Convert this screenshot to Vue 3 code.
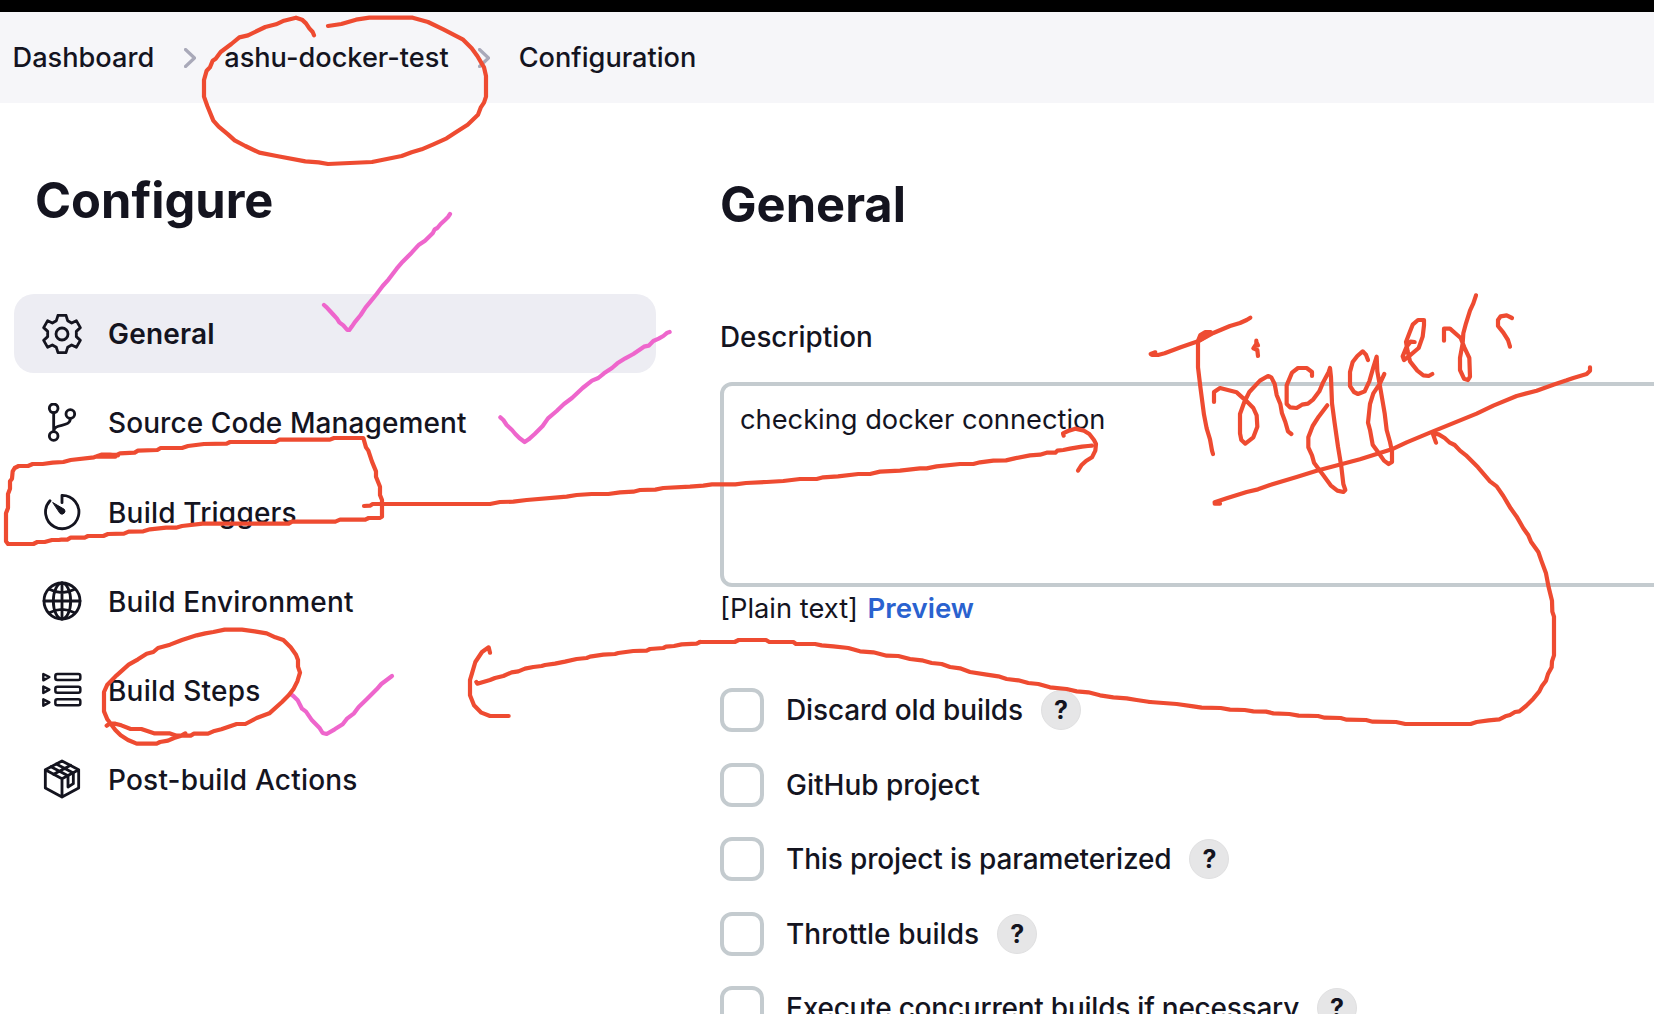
<script setup>
const crumbs = ['Dashboard', 'ashu-docker-test', 'Configuration']

const navItems = [
  { label: 'General', icon: 'gear', active: true },
  { label: 'Source Code Management', icon: 'branch', tight: true },
  { label: 'Build Triggers', icon: 'timer' },
  { label: 'Build Environment', icon: 'globe' },
  { label: 'Build Steps', icon: 'steps' },
  { label: 'Post-build Actions', icon: 'package' },
]

const options = [
  { label: 'Discard old builds', help: true, spacing: -0.12 },
  { label: 'GitHub project', help: false, spacing: 0 },
  { label: 'This project is parameterized', help: true, spacing: -0.15 },
  { label: 'Throttle builds', help: true, spacing: 0.06 },
  { label: 'Execute concurrent builds if necessary', help: true, spacing: -0.23 },
]

// Pen strokes, grouped by the corner they start from; coordinates are in thirds of a pixel.
const inkGroups = [
  {
    x: 0, y: 0, color: 'pink',
    strokes: [
      'M972 915L980 922L990 933L1001 945L1011 956L1018 967L1030 976L1042 990H1048L1056 979L1064 967L1082 945L1097 922L1112 904L1130 882L1148 858L1166 838L1190 806L1208 785L1235 758L1257 734L1275 722L1298 700L1304 688L1312 684L1322 672L1335 660L1344 651L1350 642',
    ],
  },
  {
    x: 380, y: 200, color: 'pink',
    strokes: ['M361 652L370 660L380 675L396 690L406 702L418 714L434 726L446 718L464 702L488 678L504 655L530 633L552 612L576 594L608 564L636 542L655 534L672 520L696 504L712 490L736 475L760 462L792 440L806 437L820 423L836 416L850 408L862 398L869 396'],
  },
  {
    x: 0, y: 560, color: 'pink',
    strokes: ['M872 402L880 408L893 421L906 446L918 455L936 481L958 503L968 519L980 522L1004 508L1028 493L1042 475L1062 460L1076 441L1100 418L1130 388L1144 372L1160 360L1176 348'],
  },
  {
    x: 0, y: 0, color: 'red',
    strokes: [
      'M942 106L938 96L928 85L918 70L906 59L888 53L852 62L828 73L796 81L744 106L718 112L694 132L662 156L647 176L638 182L630 202L620 212L612 240V290L622 318L640 362L656 380L684 403L704 421L736 438L778 458L830 468L916 484L956 487L984 492L1116 486L1205 468L1235 457L1265 448L1300 433L1340 415L1370 395L1403 374L1434 344L1442 323L1452 308L1458 290V228L1452 202L1432 168L1415 145L1388 118L1330 88L1284 66L1238 53H1108L1068 59L1024 72L984 78',
    ],
  },
  {
    x: 0, y: 280, color: 'red',
    strokes: [
      'M354 526L330 524H304L282 532L212 540L190 546L158 548L128 552H98L84 558H56L44 564L38 574L36 596L30 604V626L24 642V684L18 700V784L24 792H100L112 786H134L156 780H176L184 779H202L212 773H254L264 768H310L324 762L372 761L386 755L430 754L450 748L498 743H528L546 738L608 731H866L876 725H1006L1020 719H1096L1106 714H1138L1146 710V660L1140 645V620L1128 590V574L1116 545L1105 512L1098 502L1090 474H1002L990 479H838L826 486H690L680 491L612 492L564 498L546 504H482L472 510L414 512L404 518L360 520L352 524L300 526L286 530H346',
      'M1092 678L1110 677L1118 672H1470L1500 666L1540 665L1580 660L1700 650L1730 645L1775 642H1825L1860 637L1900 635L1920 630L1966 629L1990 624L2070 620L2110 617L2136 613H2206L2238 609L2300 606L2350 603L2400 597H2450L2470 592L2514 589L2575 582L2610 582L2640 575L2700 572L2760 565H2780L2810 559L2880 552H2920L2940 547L2980 542L3018 541L3044 535L3090 526L3120 524L3140 518H3166L3172 512L3190 510L3210 506L3246 500L3264 498L3276 497',
    ],
  },
  {
    x: 700, y: 160, color: 'red',
    strokes: ['M1091 827L1089 820L1104 813L1126 806L1152 812L1168 822L1182 840L1188 852L1186 872L1176 892L1158 903L1144 916L1134 932'],
  },
  {
    x: 1130, y: 280, color: 'red',
    strokes: [
      'M62 222L76 217M66 225H84L104 220L152 202L204 184L250 159L300 138L330 129L350 120L361 113',
      'M242 156H226L211 165L205 180L230 168L204 184V262L211 320L222 404L230 445L240 478L246 512L249 522',
      'M252 366V336L270 324L320 337L350 364L370 384L380 406L382 440L370 472L346 491L334 480L330 460V402L343 366L358 336L390 302L414 288L424 292L434 312L440 345L451 372L456 400L466 426L474 454L484 462',
      'M379 182V192L370 205L382 210L384 228M379 186L384 196',
      'M546 288V276L530 264H504L486 278L470 316V372L480 382L500 384L516 374L534 371L550 358L568 334L578 310L596 276L600 264L603 292L606 370L614 430L624 500L634 560L640 612L646 630L640 636L622 632L602 616L580 586L552 548L546 526L535 502V472L548 438L566 410L592 376',
      'M714 240L708 224L698 214L682 228L668 246L660 276V318L672 336L684 342L704 334L718 304L730 262L740 230L742 274L752 330L764 400L770 450L780 486L786 514V546L776 552L762 542L744 516L728 494L720 450L714 428L720 372L730 340L750 310L763 282',
      'M854 186L842 185L830 200L818 229L822 240L840 226L866 204L878 170L882 136V120H864L848 134L838 160L828 186L833 214L840 244L862 272L880 286L896 288L907 282',
      'M942 182V146L960 146L992 174L1003 202L1018 234L1020 290L1014 300L1002 296L990 270V234L998 190L1000 160L1008 130L1020 92L1030 70L1038 46',
      'M1146 114L1130 106L1112 109L1104 120V138L1120 158L1134 180L1140 200',
      'M254 671H270M254 667L290 655L350 636L384 628L420 615L500 591L560 572L690 538L790 506L830 487L900 458L1040 401L1090 377L1160 348L1220 332L1270 314L1310 301L1330 294L1370 282L1380 272V262',
    ],
  },
  {
    x: 1150, y: 500, color: 'red',
    strokes: [
      'M858 -172L848 -200L866 -197L884 -186L898 -173L914 -165L930 -148L948 -134L984 -98L1020 -56L1040 -41L1060 -12L1070 5L1082 25L1100 50L1120 85L1135 106L1143 125L1165 156L1174 182L1188 220L1196 262L1206 302L1207 335L1212 350V466L1206 484L1205 502L1194 522L1188 542L1176 558L1168 574L1150 596L1128 618L1108 634L1095 636L1080 645L1066 649L1048 658L1016 661L980 666L962 672H766L738 666L668 665L648 660L590 659L572 654L524 653L504 648L446 647L418 642L370 640L348 635L310 634L284 630L240 629L212 624L155 623L130 619L80 612L0 606',
    ],
  },
  {
    x: 700, y: 500, color: 'red',
    strokes: [
      'M1350 606L1310 600L1280 595L1240 592L1200 586L1165 577L1130 574L1100 567L1050 562L1015 552L985 549L955 541L920 537L895 529L860 524L810 516L780 505L750 501L725 492L695 489L665 481L630 477L595 468L560 467L520 457L480 454L445 444L400 439L365 436L345 432H288L280 426H208L198 420H116L104 426H0',
    ],
  },
  {
    x: 380, y: 500, color: 'red',
    strokes: [
      'M960 426L950 431L905 433L882 438L858 440L850 444L810 447L800 452L760 453L715 459L705 462L670 464L630 470L620 474L590 477L555 485L525 491L495 495L485 498L460 501L435 506L415 514L395 517L370 528L345 534L330 540L292 551L289 546',
      'M330 458L326 442L306 456L286 486L276 520L270 540V586L282 616L304 638L330 648H386',
    ],
  },
  {
    x: 0, y: 560, color: 'red',
    strokes: [
      'M320 497L330 490L346 491L364 496L392 507H424L462 520H508L530 527H572L582 521H624L640 514L664 508L710 492H736L770 474L808 460L846 426L866 406L880 388L892 364L900 338L894 320V300L888 284L872 262L850 240L826 232L800 220L764 214L726 209H674L640 216L616 220L590 226L546 240L510 254L474 264L460 276L440 281L414 298L386 314L350 346L322 374L312 396V454L322 478L346 510L362 526L384 540L410 551H470L480 546L504 542L522 534L544 527L556 520',
    ],
  },
]
</script>

<template>
  <div class="page">
    <div class="topline"></div>
    <nav class="breadcrumbs">
      <template v-for="(c, i) in crumbs" :key="c">
        <svg v-if="i" class="chevron" viewBox="0 0 12 20"><path d="M1.5 1.5L10.5 10L1.5 18.5" /></svg>
        <span>{{ c }}</span>
      </template>
    </nav>

    <div class="columns">
      <aside class="sidebar">
        <h1>Configure</h1>
        <ul class="tasks">
          <li v-for="n in navItems" :key="n.label" :class="{ active: n.active }">
            <svg v-if="n.icon === 'gear'" class="icon" viewBox="18 9 120 120">
              <path d="M66 13H90L95 29L107 36L121 29L133 50L121 61V77L133 88L121 109L107 102L95 109L90 125H66L61 109L49 102L35 109L23 88L35 77V61L23 50L35 29L49 36L61 29Z" />
              <circle cx="78" cy="69" r="18" />
            </svg>
            <svg v-else-if="n.icon === 'branch'" class="icon" viewBox="126 368 120 120">
              <circle cx="161" cy="384" r="13" /><circle cx="161" cy="467" r="13" /><circle cx="211" cy="401" r="13" />
              <path d="M161 397V454M211 414C211 444 161 426 161 454" />
            </svg>
            <svg v-else-if="n.icon === 'timer'" class="icon" viewBox="126 636 120 120">
              <path d="M186 668V646A50 50 0 1 1 150 662" />
              <path class="solid" d="M159 668L193 688A9 9 0 0 1 181 701Z" />
            </svg>
            <svg v-else-if="n.icon === 'globe'" class="icon" viewBox="126 63 120 120">
              <circle cx="186" cy="123" r="54" /><ellipse cx="186" cy="123" rx="26" ry="54" />
              <path d="M186 69V177M132 123H240M148 88Q186 108 224 88M148 158Q186 138 224 158" />
            </svg>
            <svg v-else-if="n.icon === 'steps'" class="icon thin" viewBox="126 331 120 120">
              <path d="M130 343V362L148 352ZM130 381V400L148 390ZM130 419V438L148 428Z" />
              <rect x="166" y="343" width="75" height="18" rx="6" /><rect x="166" y="381" width="75" height="18" rx="6" /><rect x="166" y="419" width="75" height="18" rx="6" />
            </svg>
            <svg v-else class="icon" viewBox="126 598 120 120">
              <path d="M186 604L236 630V685L186 712L136 685V630ZM136 630L186 657L236 630M186 657V712" />
              <path d="M153 621L204 648V682L220 672V640L169 613M161 644L212 617" />
            </svg>
            <span class="text" :class="{ tight: n.tight }">{{ n.label }}</span>
          </li>
        </ul>
      </aside>

      <main class="content">
        <h2>General</h2>
        <div class="label">Description</div>
        <div class="textarea">checking docker connection</div>
        <div class="preview"><span>[Plain text]</span><a>Preview</a></div>
        <div class="options">
          <div v-for="o in options" :key="o.label" class="option">
            <span class="checkbox"></span>
            <span class="name" :style="{ letterSpacing: o.spacing + 'px' }">{{ o.label }}</span>
            <span v-if="o.help" class="help">?</span>
          </div>
        </div>
      </main>
    </div>

    <svg class="ink" viewBox="0 0 1654 1014">
      <g v-for="(g, i) in inkGroups" :key="i" :class="g.color" :transform="`translate(${g.x} ${g.y}) scale(0.33333)`">
        <path v-for="(s, j) in g.strokes" :key="j" :d="s" />
      </g>
    </svg>
  </div>
</template>

<style>
body { margin: 0; background: #fff; }
</style>

<style scoped>
.page {
  position: relative;
  width: 1654px;
  height: 1014px;
  overflow: hidden;
  background: #fff;
  color: #14141f;
  font-family: Inter, "Liberation Sans", sans-serif;
  font-size: 28px;
  font-weight: 500;
}
.topline { height: 12px; background: #000; }
.breadcrumbs {
  display: flex;
  align-items: center;
  height: 91px;
  box-sizing: border-box;
  padding: 0 0 0 12.6px;
  background: #f6f6f9;
  font-size: 27.17px;
  white-space: nowrap;
}
.chevron { width: 12px; height: 20px; margin: 1px 28.5px 0 29.5px; fill: none; stroke: #a9a9b9; stroke-width: 3.2; stroke-linecap: round; stroke-linejoin: round; }
.columns { display: flex; }
.sidebar { flex: none; width: 642px; padding: 68px 64px 0 14px; }
h1, h2 { margin: 0; font-size: 48.8px; line-height: 60px; font-weight: 700; }
h1 { padding-left: 21px; }
.tasks { list-style: none; margin: 63px 0 0; padding: 0; display: flex; flex-direction: column; gap: 10.2px; }
.tasks li { display: flex; align-items: center; gap: 26px; height: 79px; padding-left: 28px; border-radius: 20px; letter-spacing: 0.2px; }
.tasks li.active { background: #ededf3; font-weight: 600; }
.tasks li:nth-child(n + 3) .text { padding-top: 2px; }
.tight { letter-spacing: 0.09px; }
.icon { width: 40px; height: 40px; fill: none; stroke: #14141f; stroke-width: 8.5; stroke-linejoin: round; stroke-linecap: round; }
.icon.thin { stroke-width: 7.5; }
.icon .solid { fill: #14141f; stroke-width: 3; }
.content { flex: none; width: 1100px; padding-top: 72px; }
.label { margin-top: 85px; line-height: 34px; font-size: 27.8px; }
.textarea {
  box-sizing: border-box;
  height: 205px;
  margin-top: 28px;
  padding: 17px 16px;
  border: 4px solid #c4cbcf;
  border-radius: 12px;
  font-size: 27.25px;
  line-height: 34px;
  font-weight: 400;
}
.preview { display: flex; align-items: baseline; gap: 9.5px; height: 34px; margin-top: 4px; line-height: 35px; font-size: 27.3px; font-weight: 400; }
.preview a { color: #2a62cf; font-weight: 600; font-size: 27.6px; }
.options { display: flex; flex-direction: column; gap: 30.5px; margin-top: 63px; }
.option { display: flex; align-items: center; height: 44px; white-space: nowrap; }
.checkbox { box-sizing: border-box; width: 44px; height: 44px; border: 4px solid #c4cbcf; border-radius: 12px; }
.name { margin-left: 22px; }
.help {
  box-sizing: border-box;
  width: 40px;
  height: 40px;
  margin-left: 18px;
  border: 1px solid #e0e0e1;
  border-radius: 50%;
  background: #e6e6e7;
  text-align: center;
  line-height: 38px;
  font-size: 25px;
  font-weight: 650;
}
.ink { position: absolute; inset: 0; width: 1654px; height: 1014px; fill: none; stroke-width: 12.6; stroke-linecap: round; stroke-linejoin: round; }
.ink .red { stroke: #ee4b31; }
.ink .pink { stroke: #ee66cc; }
</style>
